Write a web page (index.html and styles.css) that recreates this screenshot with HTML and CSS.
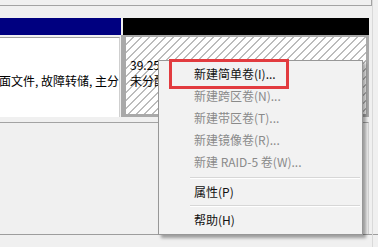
FILE: index.html
```html
<!DOCTYPE html>
<html lang="zh-CN">
<head>
<meta charset="utf-8">
<title>磁盘管理</title>
<link rel="stylesheet" href="styles.css">
</head>
<body>
<div class="window">
  <div class="main">
    <div class="top-edge"></div>
    <div class="disk">
      <div class="vol-left">
        <div class="hdr hdr-blue"></div>
        <div class="vol-body-left">
          <span class="clip">面文件, 故障转储, 主分</span>
        </div>
      </div>
      <div class="vol-right">
        <div class="hdr hdr-black"></div>
        <div class="sel">
          <div class="hatch">
            <div class="line">39.25 GB</div>
            <div class="line">未分配</div>
          </div>
        </div>
      </div>
    </div>
    <div class="lower">
      <div class="lower-inner"></div>
    </div>
  </div>
  <div class="frame-right"></div>
</div>

<div class="menu">
  <div class="item">新建简单卷(I)...</div>
  <div class="item disabled">新建跨区卷(N)...</div>
  <div class="item disabled">新建带区卷(T)...</div>
  <div class="item disabled">新建镜像卷(R)...</div>
  <div class="item disabled">新建 RAID-5 卷(W)...</div>
  <div class="sep sep-a"></div>
  <div class="item">属性(P)</div>
  <div class="sep sep-b"></div>
  <div class="item">帮助(H)</div>
</div>
<div class="highlight"></div>
</body>
</html>
```

FILE: styles.css
```css
* { box-sizing: border-box; }
html, body {
  margin: 0;
  padding: 0;
}
body {
  width: 378px;
  height: 247px;
  overflow: hidden;
  position: relative;
  background: #f0f0f0;
  font-family: "Noto Sans CJK SC", "Microsoft YaHei", sans-serif;
  font-size: 12px;
  color: #000;
}
.window {
  display: flex;
  height: 247px;
}
.main {
  width: 372px;
}
.frame-right {
  flex: 1;
  border-left: 1px solid #d9d9d9;
}
.top-edge {
  height: 6px;
  width: 372px;
  border-bottom: 1px solid #a3a3a3;
  border-right: 1px solid #a3a3a3;
}
.disk {
  display: flex;
  width: 369px;
  margin-top: 12px;
}
.vol-left {
  width: 121px;
}
.hdr {
  height: 17px;
}
.hdr-blue {
  background: #000080;
}
.hdr-black {
  background: #000;
  margin-left: 2px;
}
.vol-body-left {
  margin-top: 2px;
  height: 80px;
  width: 120px;
  background: #fff;
  border-top: 1px solid #a0a0a0;
  border-right: 1px solid #cfcfcf;
  padding-top: 35px;
}
.clip {
  display: block;
  white-space: nowrap;
  line-height: 16px;
  margin-left: -1px;
}
.vol-right {
  flex: 1;
}
.sel {
  height: 82px;
  border-style: solid;
  border-color: #a9a9a9;
  border-width: 2px 3px 3px 5px;
}
.hatch {
  height: 100%;
  background: repeating-linear-gradient(135deg, #ffffff 0 4.8px, #bcbcbc 4.8px 5.66px);
  padding: 20px 0 0 4px;
  overflow: hidden;
}
.line {
  line-height: 16px;
  white-space: nowrap;
}
.lower {
  margin-top: 5px;
  width: 378px;
  border-bottom: 1px solid #9d9d9d;
}
.lower-inner {
  width: 369px;
  height: 112px;
  border-top: 1px solid #a3a3a3;
  border-right: 1px solid #d3d3d3;
}
.menu {
  position: absolute;
  left: 158px;
  top: 60px;
  width: 205px;
  height: 175px;
  background: #f2f2f2;
  border: 1px solid #979797;
  box-shadow: 3px 3px 3px rgba(0, 0, 0, 0.35);
  padding: 2px 2px 3px 2px;
}
.item {
  height: 22px;
  line-height: 22px;
  padding-left: 33px;
  color: #111;
  white-space: nowrap;
}
.item.disabled {
  color: #8a8a8a;
}
.sep {
  margin: 0 0 0 29px;
  border-top: 1px solid #d7d7d7;
  border-bottom: 1px solid #fff;
}
.sep-a {
  margin-top: 4px;
  margin-bottom: 2px;
}
.sep-b {
  margin-top: 2px;
  margin-bottom: 2px;
}
.highlight {
  position: absolute;
  left: 169px;
  top: 59px;
  width: 120px;
  height: 30px;
  border: 3px solid #e23b3f;
}
```
